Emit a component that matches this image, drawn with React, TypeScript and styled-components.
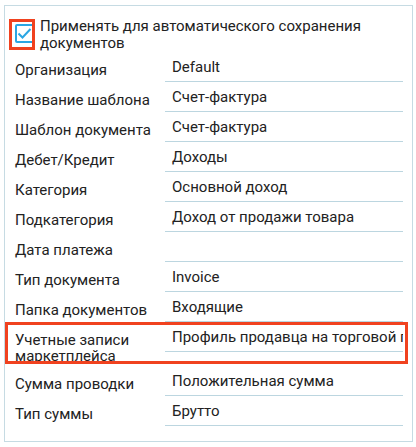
import React from "react";
import styled, { createGlobalStyle } from "styled-components";

const GlobalStyle = createGlobalStyle`
  html, body {
    margin: 0;
    padding: 0;
    background: #ffffff;
  }
  body {
    font-family: Roboto, "Noto Sans", "Liberation Sans", sans-serif;
    color: #222222;
  }
`;

const Panel = styled.div`
  box-sizing: border-box;
  width: 409px;
  height: 437px;
  margin: 5px 0 0 4px;
  padding: 12px 9px 14px 10px;
  border: 1px solid #c6dbe3;
  font-size: 15px;
`;

const CheckRow = styled.label`
  display: flex;
  align-items: flex-start;
  gap: 6px;
  line-height: 17px;
`;

const CheckBox = styled.span`
  position: relative;
  flex: none;
  box-sizing: border-box;
  width: 19px;
  height: 19px;
  margin-top: 6px;
  border: 2px solid #2ba6e3;
  border-radius: 2px;
  display: flex;
  align-items: center;
  justify-content: center;
`;

const Highlight = styled.span<{ $top: number; $right: number; $bottom: number; $left: number }>`
  position: absolute;
  top: ${(p) => p.$top}px;
  right: ${(p) => p.$right}px;
  bottom: ${(p) => p.$bottom}px;
  left: ${(p) => p.$left}px;
  border: 3px solid #f0421f;
  pointer-events: none;
`;

const CheckText = styled.span`
  padding-right: 20px;
`;

const Fields = styled.div`
  display: flex;
  flex-direction: column;
`;

const Row = styled.div`
  position: relative;
  display: grid;
  grid-template-columns: 150px 1fr;
  align-items: start;
`;

const Label = styled.div`
  padding: 10px 0 2px;
  line-height: 16px;
`;

const Value = styled.div`
  box-sizing: border-box;
  height: 30px;
  padding: 7px 0 5px 7px;
  line-height: 17px;
  border-bottom: 1px solid #bcd6e0;
  white-space: nowrap;
  overflow: hidden;
  text-overflow: clip;
`;

const fields: { label: string; value: string; marked?: boolean }[] = [
  { label: "Организация", value: "Default" },
  { label: "Название шаблона", value: "Счет-фактура" },
  { label: "Шаблон документа", value: "Счет-фактура" },
  { label: "Дебет/Кредит", value: "Доходы" },
  { label: "Категория", value: "Основной доход" },
  { label: "Подкатегория", value: "Доход от продажи товара" },
  { label: "Дата платежа", value: "" },
  { label: "Тип документа", value: "Invoice" },
  { label: "Папка документов", value: "Входящие" },
  {
    label: "Учетные записи маркетплейса",
    value: "Профиль продавца на торговой площадке",
    marked: true,
  },
  { label: "Сумма проводки", value: "Положительная сумма" },
  { label: "Тип суммы", value: "Брутто" },
];

function Check() {
  return (
    <CheckBox>
      <svg width="15" height="15" viewBox="0 0 15 15">
        <path d="M1.5 7.5 L5.5 11.5 L13.5 3" fill="none" stroke="#2ba6e3" strokeWidth="2" />
      </svg>
      <Highlight $top={-7} $right={-3} $bottom={-9} $left={-8} />
    </CheckBox>
  );
}

export default function App() {
  return (
    <>
      <GlobalStyle />
      <Panel>
        <CheckRow>
          <Check />
          <CheckText>Применять для автоматического сохранения документов</CheckText>
        </CheckRow>
        <Fields>
          {fields.map((f) => (
            <Row key={f.label}>
              <Label>{f.label}</Label>
              <Value>{f.value}</Value>
              {f.marked && <Highlight $top={0} $right={-5} $bottom={2} $left={-10} />}
            </Row>
          ))}
        </Fields>
      </Panel>
    </>
  );
}
